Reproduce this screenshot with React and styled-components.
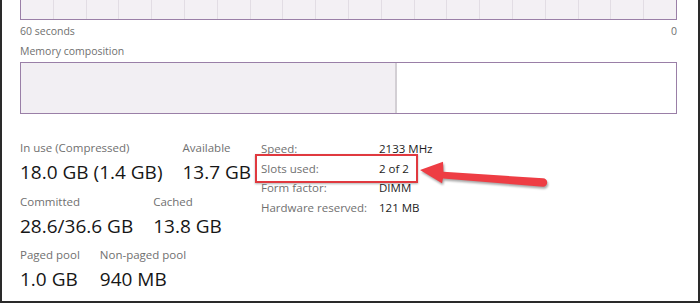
import React from 'react';
import styled, { createGlobalStyle } from 'styled-components';

const GlobalStyle = createGlobalStyle`
	html, body {
		margin: 0;
		padding: 0;
		background: #ffffff;
	}
	body {
		font-family: "Open Sans", "Noto Sans", sans-serif;
	}
`

const LINE = '#9a7fa7'
const GRID_COLS = 20

const stats = [
	[
		{ label: 'In use (Compressed)', value: '18.0 GB (1.4 GB)' },
		{ label: 'Available', value: '13.7 GB' },
	],
	[
		{ label: 'Committed', value: '28.6/36.6 GB' },
		{ label: 'Cached', value: '13.8 GB' },
	],
	[
		{ label: 'Paged pool', value: '1.0 GB' },
		{ label: 'Non-paged pool', value: '940 MB' },
	],
]

const hardware = [
	{ label: 'Speed:', value: '2133 MHz' },
	{ label: 'Slots used:', value: '2 of 2', highlight: true },
	{ label: 'Form factor:', value: 'DIMM' },
	{ label: 'Hardware reserved:', value: '121 MB' },
]

const Arrow = () => (
	<ArrowSvg width="140" height="40" viewBox="0 0 140 40">
		<path
			d="M5 15 L28 6.7 L28.5 16.7 L128 23.3 A4.2 4.2 0 0 1 128 31.7 L28 23.6 L27 28.3 Z"
			fill="#ee3d44"
		/>
	</ArrowSvg>
)

const App = () => {
	return (
		<Frame>
			<GlobalStyle />
			<Graph>
				{Array.from({ length: GRID_COLS }).map((_, i) => (
					<GridCell key={i} last={i === GRID_COLS - 1} />
				))}
			</Graph>
			<Axis>
				<span>60 seconds</span>
				<span>0</span>
			</Axis>
			<Caption>Memory composition</Caption>
			<Composition>
				<Used />
				<Free />
			</Composition>
			<Stats>
				<Figures>
					{stats.map((row, r) => (
						<FigureRow key={r}>
							{row.map(s => (
								<Figure key={s.label}>
									<Label>{s.label}</Label>
									<Value>{s.value}</Value>
								</Figure>
							))}
						</FigureRow>
					))}
				</Figures>
				<Details>
					{hardware.map(h => (
						<DetailRow key={h.label} highlight={h.highlight}>
							<DetailLabel>{h.label}</DetailLabel>
							<DetailValue>{h.value}</DetailValue>
						</DetailRow>
					))}
				</Details>
			</Stats>
			<Arrow />
		</Frame>
	)
}

export default App

const Frame = styled.div `
	position: relative;
	box-sizing: border-box;
	width: 700px;
	height: 303px;
	padding: 0 21px 0 18px;
	border-left: 2px solid #2a2a2a;
	border-right: 2px solid #2a2a2a;
	border-bottom: 2px solid #2a2a2a;
	overflow: hidden;
	background: #fff;
`

const Graph = styled.div `
	display: flex;
	height: 19px;
	border: 1px solid ${LINE};
	border-top: none;
	background: #f3f0f4;
`

const GridCell = styled.div `
	flex: 1;
	border-right: ${p => p.last ? 'none' : '1px solid #e2dde4'};
`

const Axis = styled.div `
	display: flex;
	justify-content: space-between;
	margin-top: 2px;
	height: 18px;
	font-size: 10.5px;
	line-height: 18px;
	color: #707070;
`

const Caption = styled.div `
	margin-top: 2px;
	height: 18px;
	font-size: 10.5px;
	line-height: 18px;
	color: #707070;
`

const Composition = styled.div `
	display: flex;
	margin-top: 2px;
	height: 50px;
	border: 1px solid ${LINE};
`

const Used = styled.div `
	width: 374px;
	background: #f2eff3;
	border-right: 2px solid #d3cfd4;
`

const Free = styled.div `
	flex: 1;
	background: #fff;
`

const Stats = styled.div `
	display: flex;
	margin-top: 25px;
`

const Figures = styled.div `
	display: flex;
	flex-direction: column;
	gap: 5.5px;
	flex: 0 0 241px;
`

const FigureRow = styled.div `
	display: flex;
	gap: 20px;
`

const Figure = styled.div `
	display: flex;
	flex-direction: column;
	white-space: nowrap;
`

const Label = styled.div `
	font-size: 11.5px;
	line-height: 18px;
	color: #707070;
`

const Value = styled.div `
	font-size: 19px;
	line-height: 30px;
	color: #161616;
`

const Details = styled.div `
	display: flex;
	flex-direction: column;
`

const DetailRow = styled.div `
	position: relative;
	display: grid;
	grid-template-columns: 118px auto;
	height: 19.7px;
	line-height: 19.7px;
	font-size: 11.5px;
	white-space: nowrap;

	&::after {
		content: '';
		display: ${p => p.highlight ? 'block' : 'none'};
		position: absolute;
		left: -6px;
		top: -4.5px;
		width: 163px;
		height: 28.5px;
		box-sizing: border-box;
		border: 2px solid #e0393f;
		box-shadow: 0 1px 2px rgba(0, 0, 0, 0.3);
	}
`

const DetailLabel = styled.span `
	color: #707070;
`

const DetailValue = styled.span `
	color: #1d1d1d;
`

const ArrowSvg = styled.svg `
	position: absolute;
	left: 413px;
	top: 155px;
	filter: drop-shadow(1px 2px 1px rgba(0, 0, 0, 0.35));
`
